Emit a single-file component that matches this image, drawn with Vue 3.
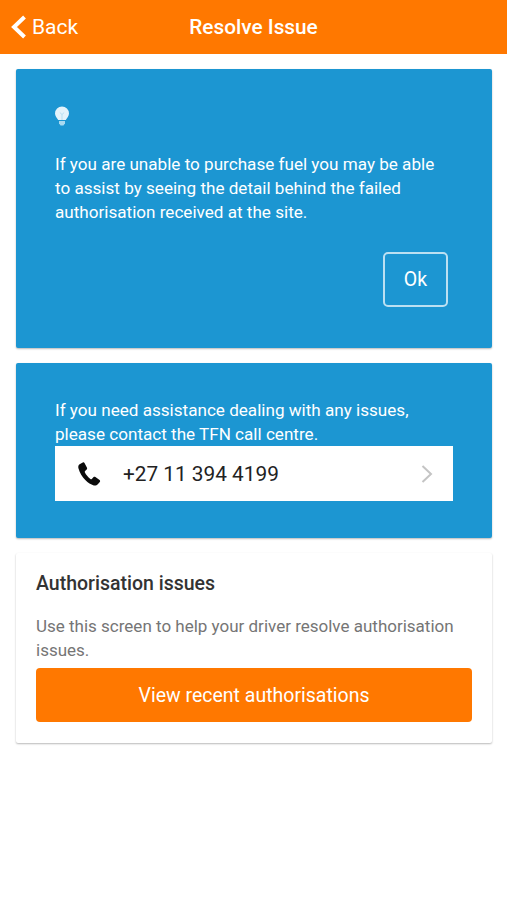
<template>
  <div class="page">
    <header class="topbar">
      <button class="back">
        <svg class="back-icon" width="20" height="28" viewBox="0 0 20 28">
          <path d="M17.500 4 L7 14 L17.500 24" fill="none" stroke="#fff" stroke-width="4" />
        </svg>
        <span>Back</span>
      </button>
      <h1>Resolve Issue</h1>
    </header>

    <main class="content">
      <section class="card blue tip">
        <svg class="bulb" width="16" height="20" viewBox="0 0 16 20">
          <path d="M8 .5a7 7 0 0 0-7 7c0 2.800 2 4.200 3.200 6.500h7.600C13 11.700 15 10.300 15 7.500a7 7 0 0 0-7-7z" fill="#e3f3fb" />
          <path d="M5 15h6v2.200L9.500 19.500h-3L5 17.200z" fill="#a9d9f0" />
          <path d="M8 14V8.500L5.800 6.500M8 8.500l2.200-2" fill="none" stroke="#a9d9f0" stroke-width=".8" />
        </svg>
        <p>If you are unable to purchase fuel you may be able to assist by seeing the detail behind the failed authorisation received at the site.</p>
        <div class="tip-actions">
          <button class="ok">Ok</button>
        </div>
      </section>

      <section class="card blue contact">
        <p>If you need assistance dealing with any issues, please contact the TFN call centre.</p>
        <div class="phone-row">
          <svg class="phone-icon" width="26" height="26" viewBox="0 0 26 26">
            <path d="M6.800 1.500 3.600 3.300C2.300 4.200 2 5.800 2.500 7.500c1.300 4.500 3.600 8.300 6.800 11.500 2.800 2.800 5.500 4.600 8.500 5.400 1.500.4 3 0 4-1.100l2-2.400c.5-.6.400-1.400-.2-1.900l-4.200-3c-.6-.4-1.300-.4-1.800.1l-1.800 1.800c-.4.400-.9.400-1.400.1-2.500-1.900-4.300-4.100-5.600-6.700-.2-.5-.1-1 .3-1.400l1.600-1.500c.5-.5.600-1.100.3-1.700L8.500 2c-.4-.7-1.100-.9-1.700-.5z" fill="#0b0b0b" />
          </svg>
          <span class="number">+27 11 394 4199</span>
          <svg class="chevron" width="12" height="18" viewBox="0 0 12 18">
            <path d="M1.500 1 L10 9 L1.500 17" fill="none" stroke="#c4c4c4" stroke-width="2" />
          </svg>
        </div>
      </section>

      <section class="card white">
        <h2>Authorisation issues</h2>
        <p>Use this screen to help your driver resolve authorisation issues.</p>
        <button class="primary">View recent authorisations</button>
      </section>
    </main>
  </div>
</template>

<script setup>
</script>

<style>
html,
body {
  margin: 0;
  background: #fff;
}
</style>

<style scoped>
.page {
  width: 507px;
  height: 900px;
  overflow: hidden;
  background: #fff;
  font-family: Roboto, "Liberation Sans", sans-serif;
}

.topbar {
  position: relative;
  height: 54px;
  background: #ff7800;
  display: flex;
  align-items: center;
  justify-content: center;
}

.topbar h1 {
  margin: 0;
  color: #fff;
  font-size: 20.800px;
  font-weight: 500;
}

.back {
  position: absolute;
  left: 7px;
  top: 13px;
  display: flex;
  align-items: center;
  gap: 5px;
  padding: 0;
  border: none;
  background: none;
  color: #fff;
  font: inherit;
  font-size: 21px;
}

.back-icon {
  display: block;
}

.content {
  padding: 15px 15px 0 16px;
  display: flex;
  flex-direction: column;
  gap: 15px;
}

.card {
  border-radius: 2px;
  box-shadow: 0 1px 2px rgba(0, 0, 0, 0.28);
}

.blue {
  background: #1c96d2;
  color: #fff;
  padding: 0 39px;
}

.blue p {
  margin: 0;
  font-size: 17.100px;
  line-height: 24px;
}

.tip {
  height: 279px;
  box-sizing: border-box;
  padding-top: 37px;
}

.bulb {
  display: block;
  margin: 0 0 26px -1px;
}

.tip-actions {
  display: flex;
  justify-content: flex-end;
  margin-top: 28px;
  margin-right: 5px;
}

.ok {
  width: 65px;
  height: 55px;
  box-sizing: border-box;
  border: 2px solid rgba(255, 255, 255, 0.7);
  border-radius: 5px;
  background: none;
  color: #fff;
  font: inherit;
  font-size: 19.500px;
}

.contact {
  height: 175px;
  box-sizing: border-box;
  padding-top: 35px;
}

.phone-row {
  height: 55px;
  background: #fff;
  display: flex;
  align-items: center;
  padding: 0 20px 0 21px;
}

.phone-icon {
  flex: none;
}

.number {
  flex: 1;
  margin-left: 21px;
  color: #222;
  font-size: 20.800px;
}

.white {
  height: 190px;
  box-sizing: border-box;
  padding: 20px 20px 0;
  background: #fff;
}

.white h2 {
  margin: 0;
  color: #333;
  font-size: 19.500px;
  font-weight: 500;
  line-height: 22px;
}

.white p {
  margin: 19px 0 6px;
  color: #757575;
  font-size: 17px;
  line-height: 24px;
}

.primary {
  display: block;
  width: 100%;
  height: 54px;
  border: none;
  border-radius: 4px;
  background: #ff7800;
  color: #fff;
  font: inherit;
  font-size: 19.500px;
}
</style>
